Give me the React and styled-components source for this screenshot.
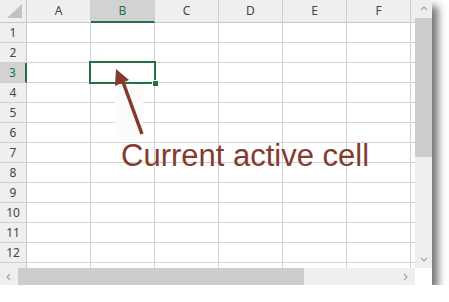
import React from "react";
import styled, { createGlobalStyle } from "styled-components";

const Global = createGlobalStyle`
  html, body { margin: 0; padding: 0; background: #ffffff; }
  body { font-family: "Noto Sans", "Liberation Sans", sans-serif; }
`;

const GREEN = "#217346";
const LINE = "#d4d4d4";

const Window = styled.div`
  position: relative;
  width: 432px;
  height: 285px;
  display: grid;
  grid-template-columns: 415px 17px;
  grid-template-rows: 268px 17px;
  background: #fff;
  box-shadow: 6px 6px 8px rgba(0, 0, 0, 0.55);
`;

const Sheet = styled.div`
  display: grid;
  grid-template-columns: 27px repeat(7, 64px);
  grid-template-rows: 23px repeat(13, 20px);
  overflow: hidden;
`;

const HeaderBase = styled.div`
  box-sizing: border-box;
  display: flex;
  align-items: center;
  justify-content: center;
  font-size: 12px;
  color: ${(p) => (p.$selected ? GREEN : "#444")};
  background: ${(p) => (p.$selected ? "#d2d2d2" : "#efefef")};
`;

const CornerCell = styled(HeaderBase)`
  position: relative;
  border-right: 1px solid #c8c8c8;
  border-bottom: 1px solid #c8c8c8;
`;

const Triangle = styled.div`
  position: absolute;
  right: 4px;
  bottom: 4px;
  width: 0;
  height: 0;
  border-left: 15px solid transparent;
  border-bottom: 14px solid #c2c2c2;
`;

const ColHeader = styled(HeaderBase)`
  padding-bottom: 1px;
  border-right: 1px solid #d0d0d0;
  border-bottom: ${(p) => (p.$selected ? `2px solid ${GREEN}` : "1px solid #c8c8c8")};
`;

const RowHeader = styled(HeaderBase)`
  border-bottom: 1px solid #d0d0d0;
  border-right: ${(p) => (p.$selected ? `2px solid ${GREEN}` : "1px solid #c8c8c8")};
`;

const Cell = styled.div`
  box-sizing: border-box;
  position: relative;
  border-right: 1px solid ${LINE};
  border-bottom: 1px solid ${LINE};
  background: #fff;

  ${(p) =>
    p.$active &&
    `
    &::after {
      content: "";
      position: absolute;
      left: -2px;
      top: -2px;
      right: -2px;
      bottom: -2px;
      border: 2px solid ${GREEN};
      z-index: 2;
    }
    &::before {
      content: "";
      position: absolute;
      right: -4px;
      bottom: -4px;
      width: 5px;
      height: 5px;
      background: ${GREEN};
      border-left: 1px solid #fff;
      border-top: 1px solid #fff;
      z-index: 3;
    }
  `}
`;

const VScroll = styled.div`
  display: flex;
  flex-direction: column;
  background: #efefef;
`;

const HScroll = styled.div`
  display: flex;
  background: #efefef;
`;

const ArrowBox = styled.div`
  flex: 0 0 ${(p) => p.$size}px;
  display: flex;
  align-items: center;
  justify-content: center;
`;

const VThumb = styled.div`
  height: 139px;
  background: #cdcdcd;
`;

const HThumb = styled.div`
  width: 286px;
  background: #cdcdcd;
`;

const Spacer = styled.div`
  flex: 1;
`;

const CornerBox = styled.div`
  background: #fff;
`;

const Overlay = styled.svg`
  position: absolute;
  left: 0;
  top: 0;
  pointer-events: none;
  z-index: 5;
`;

const Label = styled.div`
  position: absolute;
  left: 121px;
  top: 140px;
  font-family: "Liberation Sans", Arial, sans-serif;
  font-size: 31px;
  line-height: 31px;
  color: #843b2d;
  white-space: nowrap;
  z-index: 6;
`;

const Chevron = ({ dir }) => {
  const pts = {
    up: "1,5 4,2 7,5",
    down: "1,2 4,5 7,2",
    left: "5,1 2,4 5,7",
    right: "2,1 5,4 2,7",
  }[dir];
  return (
    <svg width="8" height="8" viewBox="0 0 8 8">
      <polyline points={pts} fill="none" stroke="#a3a3a3" strokeWidth="1.1" />
    </svg>
  );
};

const COLS = ["A", "B", "C", "D", "E", "F", ""];
const ROWS = Array.from({ length: 13 }, (_, i) => i + 1);

export default function App() {
  return (
    <>
      <Global />
      <Window>
        <Sheet>
          <CornerCell>
            <Triangle />
          </CornerCell>
          {COLS.map((c, i) => (
            <ColHeader key={i} $selected={c === "B"}>
              {c}
            </ColHeader>
          ))}
          {ROWS.map((r) => (
            <React.Fragment key={r}>
              <RowHeader $selected={r === 3}>{r <= 12 ? r : ""}</RowHeader>
              {COLS.map((c, i) => (
                <Cell key={i} $active={r === 3 && c === "B"} />
              ))}
            </React.Fragment>
          ))}
        </Sheet>
        <VScroll>
          <ArrowBox $size={18}>
            <Chevron dir="up" />
          </ArrowBox>
          <VThumb />
          <Spacer />
          <ArrowBox $size={17}>
            <Chevron dir="down" />
          </ArrowBox>
        </VScroll>
        <HScroll>
          <ArrowBox $size={18}>
            <Chevron dir="left" />
          </ArrowBox>
          <HThumb />
          <Spacer />
          <ArrowBox $size={18}>
            <Chevron dir="right" />
          </ArrowBox>
        </HScroll>
        <CornerBox />
        <Overlay width="432" height="285" viewBox="0 0 432 285">
          <rect x="115" y="85" width="28" height="52" fill="#fbfbfb" />
          <line x1="142" y1="134" x2="123" y2="82" stroke="#843b2d" strokeWidth="3.5" />
          <polygon points="116,69 129,80 115,86" fill="#843b2d" />
        </Overlay>
        <Label>Current active cell</Label>
      </Window>
    </>
  );
}
